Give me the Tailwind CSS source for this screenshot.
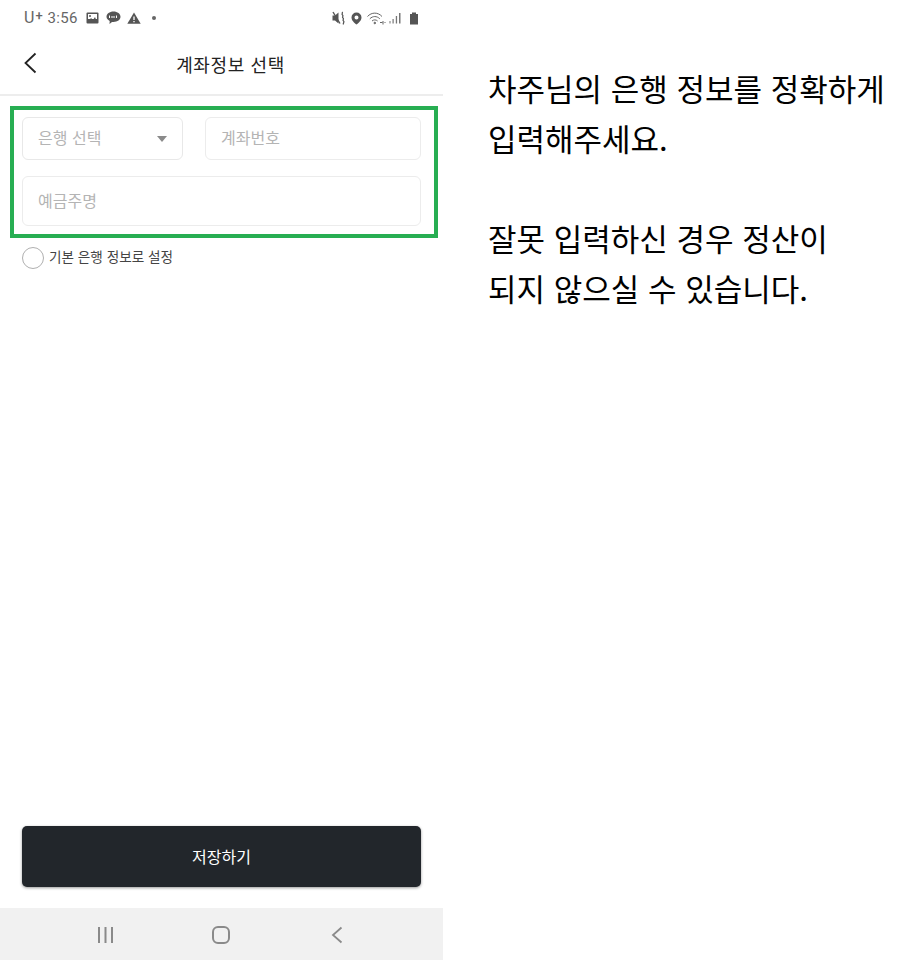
<!DOCTYPE html>
<html lang="ko">
<head>
  <meta charset="UTF-8" />
  <meta name="viewport" content="width=device-width, initial-scale=1.0" />
  <title>계좌정보 선택</title>
  <script src="https://cdn.jsdelivr.net/npm/@tailwindcss/browser@4"></script>
</head>
<body class="bg-white font-['Noto_Sans_CJK_KR','Noto_Sans',sans-serif]">
  <div class="flex w-[900px] h-[960px] overflow-hidden">
    <!-- phone -->
    <div class="w-[443px] h-full flex flex-col shrink-0">
      <!-- status bar -->
      <div class="h-[36px] pl-[24px] pr-[24px] flex items-center justify-between text-[#666] shrink-0">
        <div class="flex items-center">
          <span class="font-['Roboto'] text-[16px] leading-none">U</span>
          <span class="font-['Roboto'] text-[13px] font-medium leading-none mb-[6px] ml-[1px]">+</span>
          <span class="font-['Roboto'] text-[15px] leading-none ml-[5px] tracking-[0.3px]">3:56</span>
          <svg class="ml-[8px]" width="13" height="12" viewBox="0 0 13 12"><rect x="0.5" y="0.5" width="12" height="11" rx="1" fill="#555"/><rect x="2" y="2" width="9" height="5" fill="#fff"/><circle cx="4" cy="4" r="1" fill="#555"/><path d="M2 10l3-4 2 2 2-3 2 5z" fill="#555"/></svg>
          <svg class="ml-[7px]" width="15" height="14" viewBox="0 0 15 14"><path d="M7.5 0.5c4 0 7 2.3 7 5.3s-3 5.2-7 5.2c-.5 0-1 0-1.5-.1L3.500 13l.2-3C1.700 9 .5 7.500 .5 5.800c0-3 3-5.300 7-5.300z" fill="#555"/><path d="M3.500 4.500v2.500M6 5v2M8 5v2M10.500 4.500v2.500" stroke="#fff" stroke-width="1"/></svg>
          <svg class="ml-[6px]" width="14" height="12" viewBox="0 0 14 12"><path d="M7 0.500L13.700 11.800H.3z" fill="#555"/><path d="M7 4.500v3.500M7 9v1.300" stroke="#fff" stroke-width="1.300"/></svg>
          <span class="ml-[11px] w-[4px] h-[4px] rounded-full bg-[#666]"></span>
        </div>
        <div class="flex items-center">
          <svg width="14" height="14" viewBox="0 0 14 14"><path d="M0.500 4.500h2.500L6.500 1.500v11l-3.500-3H0.500z" fill="#555"/><path d="M1 1l7 11.500" stroke="#555" stroke-width="1.400"/><path d="M10 1c1.500 1 -1 2 .5 3s-1 2 .5 3-1 2 .5 3-1 2 0 3.500" stroke="#555" stroke-width="1.300" fill="none"/></svg>
          <svg class="ml-[5px]" width="11" height="13" viewBox="0 0 11 13"><path fill-rule="evenodd" d="M5.500 0.500a5 5 0 0 1 5 5c0 3-3 5.500-5 7-2-1.500-5-4-5-7a5 5 0 0 1 5-5zm0 3a2 2 0 1 0 0 4 2 2 0 0 0 0-4z" fill="#555"/></svg>
          <svg class="ml-[5px]" width="19" height="13" viewBox="0 0 19 13" fill="none" stroke="#666" stroke-width="1"><path d="M.5 4.500c4-4.500 10.500-4.500 14.500 0"/><path d="M2.800 6.800c3-3 7-3 10 0"/><path d="M5 9c1.700-1.500 4-1.500 5.600 0"/><circle cx="7.800" cy="11" r="0.800" fill="#666"/><path d="M13 10.500h2.500M16 9v3.500M18.500 10.500h-1"/></svg>
          <svg class="ml-[3px]" width="13" height="12" viewBox="0 0 13 12" fill="#777"><rect x="0.500" y="9" width="1" height="2.500"/><rect x="3.500" y="7" width="1.200" height="4.500"/><rect x="6.800" y="4" width="1.300" height="7.500"/><rect x="10" y="1" width="1.500" height="10.500"/></svg>
          <svg class="ml-[7px]" width="10" height="13" viewBox="0 0 10 13"><path d="M3 0.500h4v1.500h2v10.500H1V2h2z" fill="#555"/></svg>
        </div>
      </div>
      <!-- header -->
      <div class="relative h-[60px] flex items-center justify-center border-b-2 border-[#ededed] shrink-0">
        <svg class="absolute left-[23px] top-[16px]" width="14" height="22" viewBox="0 0 14 22" fill="none" stroke="#222" stroke-width="1.800"><path d="M12.500 1.500L2.500 11l10 9.500"/></svg>
        <h1 class="text-[18px] tracking-[0.6px] text-[#222] leading-none mb-[3px] ml-[18px]">계좌정보 선택</h1>
      </div>
      <!-- form -->
      <div class="mt-[10px] ml-[10px] w-[428px] h-[132px] border-4 border-[#27ae52] pt-[7px] pl-[8px] pr-[13px] flex flex-col gap-[16px] shrink-0">
        <div class="flex gap-[22px]">
          <div class="w-[161px] h-[43px] border border-[#e8e8e8] rounded-[6px] pl-[15px] pr-[15px] flex items-center justify-between">
            <span class="text-[16px] text-[#b4b4b4] leading-none mb-[3px]">은행 선택</span>
            <span class="w-0 h-0 border-x-[5px] border-x-transparent border-t-[6px] border-t-[#8a8a8a]"></span>
          </div>
          <div class="w-[216px] h-[43px] border border-[#ececec] rounded-[6px] pl-[15px] flex items-center">
            <span class="text-[16px] text-[#b4b4b4] leading-none mb-[3px]">계좌번호</span>
          </div>
        </div>
        <div class="w-[399px] h-[50px] border border-[#ececec] rounded-[6px] pl-[15px] flex items-center">
          <span class="text-[16px] text-[#b4b4b4] leading-none mb-[3px]">예금주명</span>
        </div>
      </div>
      <!-- default bank -->
      <div class="mt-[8px] ml-[22px] flex items-center gap-[5px] h-[24px] shrink-0">
        <span class="w-[22px] h-[22px] rounded-full border border-[#b0b0b0]"></span>
        <span class="text-[13.6px] text-[#444] leading-none mb-[3px]">기본 은행 정보로 설정</span>
      </div>
      <div class="flex-1"></div>
      <!-- save -->
      <button class="mx-[22px] mb-[21px] h-[61px] pb-[2px] bg-[#22262b] rounded-[5px] shadow-[0_1px_3px_rgba(0,0,0,0.4)] text-white text-[16px] shrink-0">저장하기</button>
      <!-- nav bar -->
      <div class="h-[52px] bg-[#f1f1f1] flex items-center shrink-0 relative">
        <svg class="absolute left-[97px] top-[19px]" width="17" height="16" viewBox="0 0 17 16" stroke="#8a8a8a" stroke-width="2"><path d="M2 0v16M8.500 0v16M15 0v16"/></svg>
        <svg class="absolute left-[212px] top-[18px]" width="18" height="18" viewBox="0 0 18 18" fill="none" stroke="#8a8a8a" stroke-width="2"><rect x="1" y="1" width="16" height="16" rx="5"/></svg>
        <svg class="absolute left-[331px] top-[18px]" width="12" height="18" viewBox="0 0 12 18" fill="none" stroke="#8a8a8a" stroke-width="1.800"><path d="M10.500 1.500L2 9l8.500 7.500"/></svg>
      </div>
    </div>
    <!-- guide text -->
    <div class="pl-[45px] pt-[63px] text-[31px] leading-[50px] text-black whitespace-nowrap">
      <p>차주님의 은행 정보를 정확하게</p>
      <p>입력해주세요.</p>
      <p class="mt-[50px]">잘못 입력하신 경우 정산이</p>
      <p>되지 않으실 수 있습니다.</p>
    </div>
  </div>
</body>
</html>
